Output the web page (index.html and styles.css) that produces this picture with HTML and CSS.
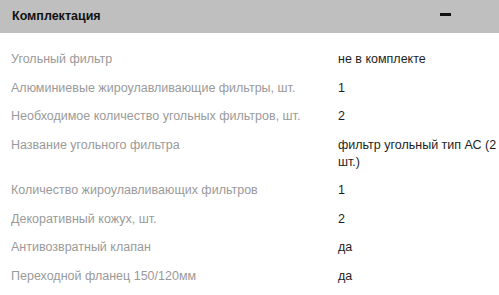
FILE: index.html
```html
<!DOCTYPE html>
<html lang="ru">
<head>
<meta charset="utf-8">
<link rel="stylesheet" href="styles.css">
</head>
<body>
<section class="spec">
  <header class="spec-head">
    <h2 class="spec-title">Комплектация</h2>
    <span class="spec-toggle"></span>
  </header>
  <dl class="spec-list">
    <div class="spec-row"><dt>Угольный фильтр</dt><dd>не в комплекте</dd></div>
    <div class="spec-row"><dt>Алюминиевые жироулавливающие фильтры, шт.</dt><dd>1</dd></div>
    <div class="spec-row"><dt>Необходимое количество угольных фильтров, шт.</dt><dd>2</dd></div>
    <div class="spec-row"><dt>Название угольного фильтра</dt><dd>фильтр угольный тип АС (2 шт.)</dd></div>
    <div class="spec-row"><dt>Количество жироулавливающих фильтров</dt><dd>1</dd></div>
    <div class="spec-row"><dt>Декоративный кожух, шт.</dt><dd>2</dd></div>
    <div class="spec-row"><dt>Антивозвратный клапан</dt><dd>да</dd></div>
    <div class="spec-row"><dt>Переходной фланец 150/120мм</dt><dd>да</dd></div>
  </dl>
</section>
</body>
</html>
```
FILE: styles.css
```css
* { box-sizing: border-box; }
html, body { margin: 0; padding: 0; background: #fff; }
body { font-family: "Liberation Sans", Arial, sans-serif; }
.spec-head {
  height: 33px;
  background: #bfbfbf;
  display: flex;
  align-items: center;
  justify-content: space-between;
  padding: 0 48px 0 12px;
}
.spec-title {
  margin: -2px 0 0 0;
  font-size: 12.5px;
  font-weight: bold;
  color: #111;
}
.spec-toggle {
  width: 11px;
  height: 3px;
  background: #111;
  margin-top: -4px;
}
.spec-list {
  margin: 0;
  padding: 18px 0 0 0;
  display: flex;
  flex-direction: column;
  gap: 11.5px;
}
.spec-row {
  display: grid;
  grid-template-columns: 338px 1fr;
  font-size: 12.5px;
  line-height: 17px;
}
.spec-row dt { padding-left: 11px; color: #9a9a9a; }
.spec-row dd { margin: 0; padding-right: 2px; color: #1e1e1e; }
```
